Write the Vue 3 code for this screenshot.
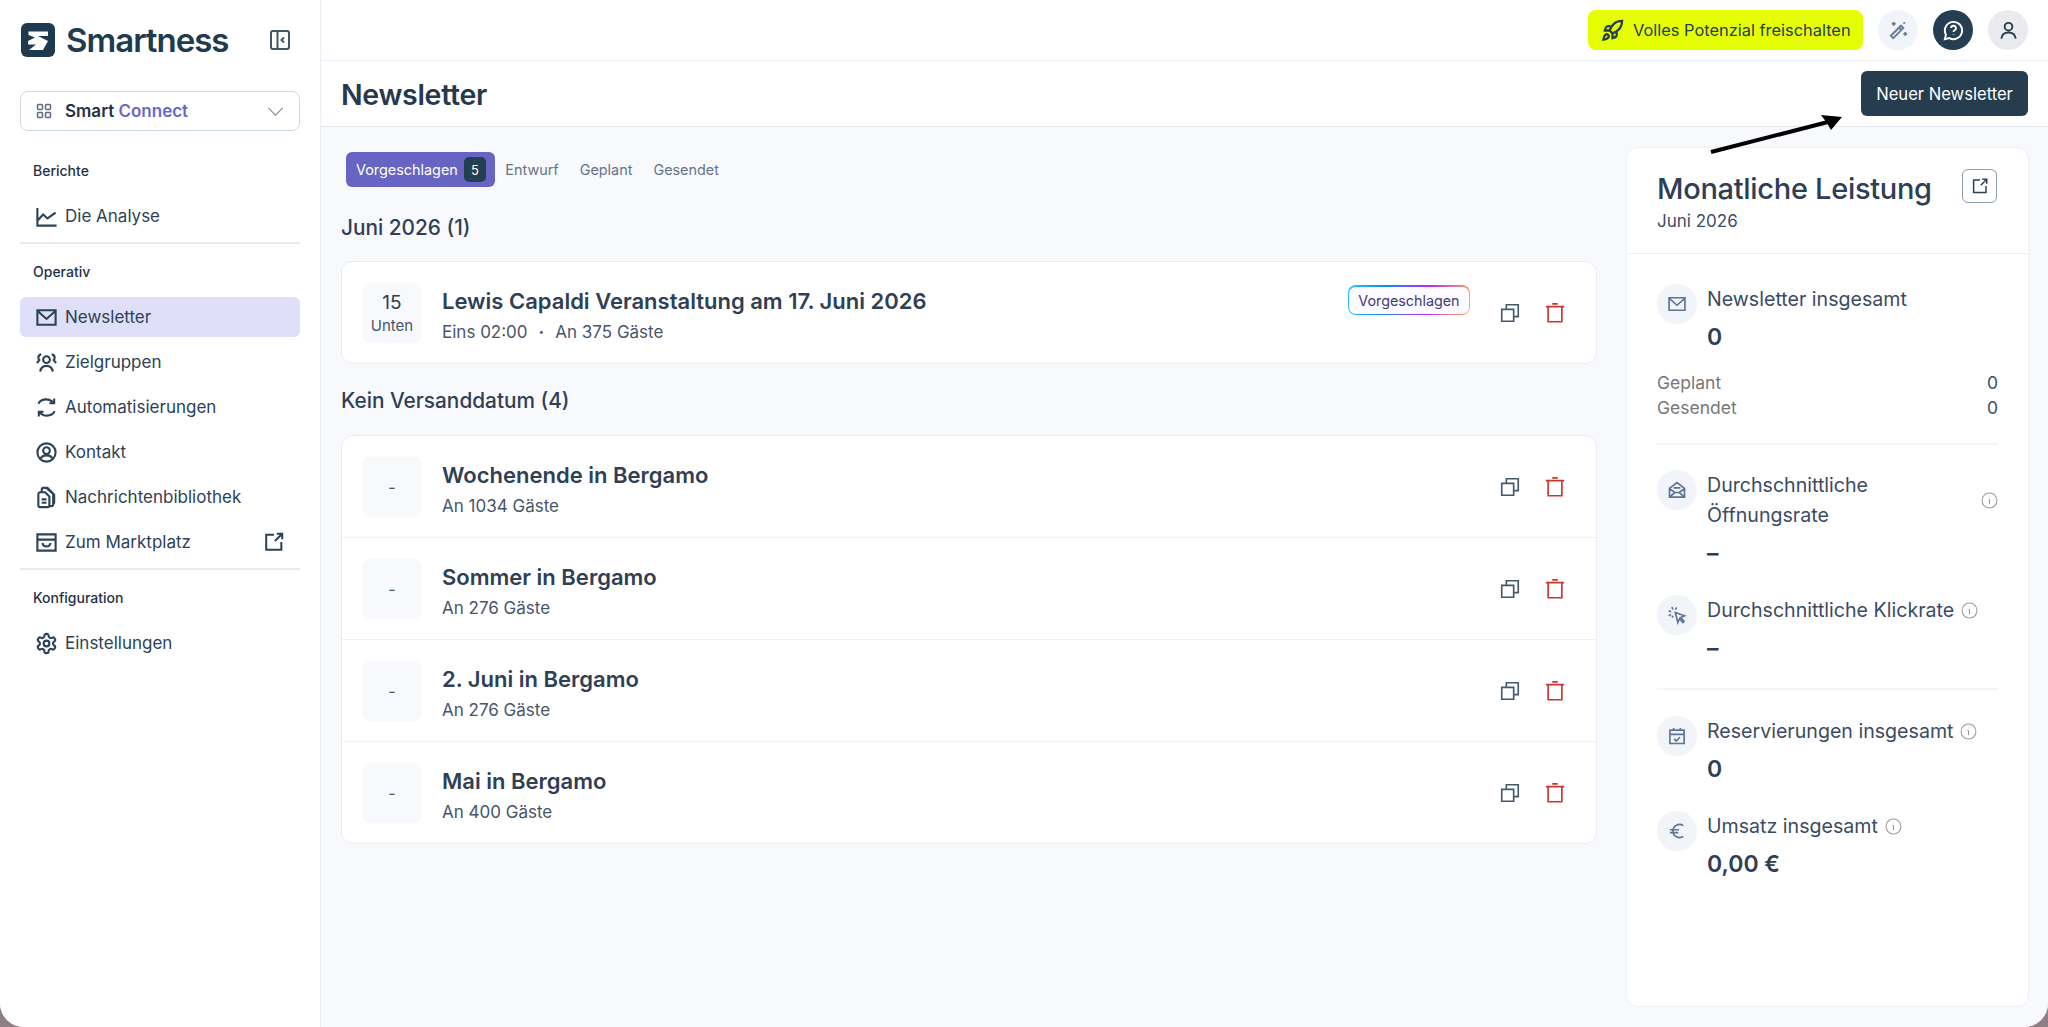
<template>
  <div class="app">
    <aside class="sidebar">
      <div class="brand">
        <svg class="logo" viewBox="0 0 34 34">
          <rect width="34" height="34" rx="6" fill="#1f3a4f" />
          <path d="M7.5 8.5H27V13H17l10 5-5 9H8l7-5.5H7v-3.5l7-3.5-6.5-2.5z" fill="#fff" />
        </svg>
        <span class="brand-name">Smartness</span>
        <svg class="collapse" viewBox="0 0 20 20">
          <rect x="1" y="1" width="18" height="18" rx="2" />
          <path d="M7.5 1v18M14 7.5 11.5 10l2.5 2.5" />
        </svg>
      </div>
      <div class="product">
        <svg class="ic-16" viewBox="0 0 16 16">
          <rect x="1.5" y="1.5" width="5" height="5" rx="1" />
          <rect x="9.5" y="1.5" width="5" height="5" rx="1" />
          <rect x="1.5" y="9.5" width="5" height="5" rx="1" />
          <rect x="9.5" y="9.5" width="5" height="5" rx="1" />
        </svg>
        <span class="product-name">Smart <em>Connect</em></span>
        <svg class="chev" viewBox="0 0 18 10"><path d="M1 1l8 8 8-8" /></svg>
      </div>

      <template v-for="(group, g) in nav" :key="group.title">
        <div v-if="g > 0" class="nav-sep"></div>
        <div class="nav-title">{{ group.title }}</div>
        <a v-for="item in group.items" :key="item.label" class="nav-item" :class="{ active: item.active }">
          <svg class="nav-icon" viewBox="0 0 24 24"><path :d="icons[item.icon]" /></svg>
          <span>{{ item.label }}</span>
          <svg v-if="item.external" class="nav-ext" viewBox="0 0 24 24"><path :d="icons.external" /></svg>
        </a>
      </template>
    </aside>

    <div class="main">
      <header class="topbar">
        <button class="upgrade">
          <svg viewBox="0 0 24 24"><path :d="icons.rocket" /></svg>
          Volles Potenzial freischalten
        </button>
        <span class="round light"><svg viewBox="0 0 24 24"><path :d="icons.wand" /></svg></span>
        <span class="round dark"><svg viewBox="0 0 24 24"><path :d="icons.help" /></svg></span>
        <span class="round grey"><svg viewBox="0 0 24 24"><path :d="icons.user" /></svg></span>
      </header>

      <div class="titlebar">
        <h1>Newsletter</h1>
        <button class="primary">Neuer Newsletter</button>
      </div>

      <div class="content">
        <section class="lists">
          <div class="tabs">
            <span class="tab on">Vorgeschlagen <b>5</b></span>
            <span class="tab">Entwurf</span>
            <span class="tab">Geplant</span>
            <span class="tab">Gesendet</span>
          </div>

          <template v-for="block in blocks" :key="block.title">
            <h2>{{ block.title }}</h2>
            <div class="card">
              <div v-for="row in block.rows" :key="row.title" class="row">
                <div class="date" :class="{ big: !row.day }">
                  <template v-if="row.day">
                    <strong>{{ row.day }}</strong>
                    <small>{{ row.month }}</small>
                  </template>
                  <template v-else>-</template>
                </div>
                <div class="row-text">
                  <h3>{{ row.title }}</h3>
                  <p>
                    <template v-if="row.time">{{ row.time }}<i class="dot">·</i></template>{{ row.guests }}
                  </p>
                </div>
                <span v-if="row.badge" class="badge"><span>{{ row.badge }}</span></span>
                <svg class="act copy" viewBox="0 0 24 24"><path :d="icons.copy" /></svg>
                <svg class="act trash" viewBox="0 0 24 24"><path :d="icons.trash" /></svg>
              </div>
            </div>
          </template>
        </section>

        <aside class="panel">
          <div class="panel-head">
            <div>
              <h2>Monatliche Leistung</h2>
              <p>Juni 2026</p>
            </div>
            <span class="open"><svg viewBox="0 0 24 24"><path :d="icons.external" /></svg></span>
          </div>
          <div class="panel-body">
            <div class="stat">
              <span class="stat-ic"><svg viewBox="0 0 24 24"><path :d="icons.mail" /></svg></span>
              <div>
                <div class="stat-label">Newsletter insgesamt</div>
                <div class="stat-value">0</div>
              </div>
            </div>
            <dl class="split">
              <div><dt>Geplant</dt><dd>0</dd></div>
              <div><dt>Gesendet</dt><dd>0</dd></div>
            </dl>
            <div class="panel-sep"></div>
            <div class="stat wide">
              <span class="stat-ic"><svg viewBox="0 0 24 24"><path :d="icons.mailOpen" /></svg></span>
              <div class="grow">
                <div class="stat-label wrap">
                  <span>Durchschnittliche<br />Öffnungsrate</span>
                  <svg class="info" viewBox="0 0 16 16"><path :d="icons.info" /></svg>
                </div>
                <div class="stat-value dash">–</div>
              </div>
            </div>
            <div class="stat next">
              <span class="stat-ic"><svg viewBox="0 0 24 24"><path :d="icons.click" /></svg></span>
              <div>
                <div class="stat-label">
                  Durchschnittliche Klickrate
                  <svg class="info" viewBox="0 0 16 16"><path :d="icons.info" /></svg>
                </div>
                <div class="stat-value dash">–</div>
              </div>
            </div>
            <div class="panel-sep second"></div>
            <div class="stat">
              <span class="stat-ic"><svg viewBox="0 0 24 24"><path :d="icons.calendar" /></svg></span>
              <div>
                <div class="stat-label">
                  Reservierungen insgesamt
                  <svg class="info" viewBox="0 0 16 16"><path :d="icons.info" /></svg>
                </div>
                <div class="stat-value">0</div>
              </div>
            </div>
            <div class="stat next">
              <span class="stat-ic"><svg viewBox="0 0 24 24"><path :d="icons.euro" /></svg></span>
              <div>
                <div class="stat-label">
                  Umsatz insgesamt
                  <svg class="info" viewBox="0 0 16 16"><path :d="icons.info" /></svg>
                </div>
                <div class="stat-value">0,00 €</div>
              </div>
            </div>
          </div>
        </aside>
      </div>
    </div>

    <!-- annotation drawn on top of the screenshot -->
    <svg class="arrow" viewBox="0 0 140 45">
      <path d="M3 38 120 8" />
      <path class="head" d="M134 3 113 1l6 8 4 7z" />
    </svg>
  </div>
</template>

<script setup>
const icons = {
  chart: 'M2.5 3v18.5h20M3 16l5.5-6 4.5 4 8.5-6',
  mail: 'M2.5 4.5h19v15h-19zM3 5.5l9 8 9-8',
  users: 'M8.5 9a3.5 3.5 0 1 0 7 0a3.5 3.5 0 1 0-7 0M5.5 21.5c.5-4 3-6 6.5-6s6 2 6.5 6M6.5 3.5a3.5 3.5 0 0 0-3 3.5c0 1 .5 2 1 2.5L2 12.5M17.5 3.5a3.5 3.5 0 0 1 3 3.5c0 1-.5 2-1 2.5l2.5 3',
  sync: 'M3.5 8c1.5-2.8 4.5-4.5 8-4.5 3 0 5.5 1 7.5 3.5M20 2.5V7.5h-5M20.5 16c-1.5 2.8-4.5 4.5-8 4.5-3 0-5.5-1-7.5-3.5M4 21.5v-5h5',
  contact: 'M2.5 12a9.5 9.5 0 1 0 19 0a9.5 9.5 0 1 0-19 0M8.5 10a3.5 3.5 0 1 0 7 0a3.5 3.5 0 1 0-7 0M5.5 19c1-2.5 3.5-4 6.5-4s5.5 1.5 6.5 4',
  library: 'M3.5 8.5a2 2 0 0 1 2-2h5l4.5 4.5v9a2 2 0 0 1-2 2h-7.5a2 2 0 0 1-2-2zM7 6V4a2 2 0 0 1 2-2h4l6 6v11a2 2 0 0 1-2 2h-2M12 2.5l1 .5 7 6v8c0 1-1 2-2 2M7 14h5M7 17.5h5',
  store: 'M2.5 3.5h19v17h-19zM2.5 9h19M8 12.5c0 2 1.5 3.5 4 3.5s4-1.5 4-3.5',
  external: 'M12 4H3.5v16.5H20V12M13 11l8-8M15 3h6v6',
  gear: 'M12.22 2h-.44a2 2 0 0 0-2 2v.18a2 2 0 0 1-1 1.73l-.43.25a2 2 0 0 1-2 0l-.15-.08a2 2 0 0 0-2.73.73l-.22.38a2 2 0 0 0 .73 2.73l.15.1a2 2 0 0 1 1 1.72v.51a2 2 0 0 1-1 1.74l-.15.09a2 2 0 0 0-.73 2.73l.22.38a2 2 0 0 0 2.73.73l.15-.08a2 2 0 0 1 2 0l.43.25a2 2 0 0 1 1 1.73V20a2 2 0 0 0 2 2h.44a2 2 0 0 0 2-2v-.18a2 2 0 0 1 1-1.73l.43-.25a2 2 0 0 1 2 0l.15.08a2 2 0 0 0 2.73-.73l.22-.39a2 2 0 0 0-.73-2.73l-.15-.08a2 2 0 0 1-1-1.74v-.5a2 2 0 0 1 1-1.74l.15-.09a2 2 0 0 0 .73-2.73l-.22-.38a2 2 0 0 0-2.73-.73l-.15.08a2 2 0 0 1-2 0l-.43-.25a2 2 0 0 1-1-1.73V4a2 2 0 0 0-2-2zM9 12a3 3 0 1 0 6 0a3 3 0 1 0-6 0',
  rocket: 'M4.5 16.5c-1.5 1.26-2 5-2 5s3.74-.5 5-2c.71-.84.7-2.13-.09-2.91a2.18 2.18 0 0 0-2.91-.09zM12 15l-3-3a22 22 0 0 1 2-3.95A12.88 12.88 0 0 1 22 2c0 2.72-.78 7.5-6 11a22.35 22.35 0 0 1-4 2zM9 12H4s.55-3.03 2-4c1.62-1.08 5 0 5 0M12 15v5s3.03-.55 4-2c1.08-1.62 0-5 0-5',
  wand: 'M4 17.5 14.5 7l2.5 2.5L6.5 20zM12.5 9l2.5 2.5M7 3v4M5 5h4M19 13.5v4M17 15.5h4M18 3v2M17 4h2',
  help: 'M12 3a9 9 0 1 1-4.3 16.9L3 21l1.1-4.7A9 9 0 0 1 12 3zM9.5 9.5a2.5 2.5 0 1 1 3.6 2.25c-.8.4-1.1.9-1.1 1.75M12 16.3v.4',
  user: 'M8 8a4 4 0 1 0 8 0a4 4 0 1 0-8 0M4.5 20.5c.5-4 3.5-6.5 7.5-6.5s7 2.5 7.5 6.5',
  copy: 'M3 8h13v13H3zM8 8V3h13v13h-5',
  trash: 'M2 5h20M9 2h6M4.5 5v16.5h15V5',
  mailOpen: 'M3 10v10.5h18V10L12 3zM3 10.5l6.5 4.5h5L21 10.5M3.5 20l6-5M20.5 20l-6-5M8 9.5h8',
  click: 'M10 9l11 4-4.5 2 4 4.5-1.5 1.5-4-4.5-2 4.5zM6 2.5l1 3M2 7l3 1M2 13l3-1.5M11.5 3 10 5.5M6 15l1.5-2',
  calendar: 'M3.5 5h17v16h-17zM3.5 10h17M8 2.5V6M16 2.5V6M8.5 15.5l2.5 2.5 4.5-4.5',
  euro: 'M19.5 5.5A8 8 0 0 0 7 12a8 8 0 0 0 12.5 6.5M3.5 10.5h11M3.5 14h10',
  info: 'M1 8a7 7 0 1 0 14 0a7 7 0 1 0-14 0M8 7v4.5M7 7h1M8 4.5v.5'
}

const nav = [
  { title: 'Berichte', items: [{ label: 'Die Analyse', icon: 'chart' }] },
  {
    title: 'Operativ',
    items: [
      { label: 'Newsletter', icon: 'mail', active: true },
      { label: 'Zielgruppen', icon: 'users' },
      { label: 'Automatisierungen', icon: 'sync' },
      { label: 'Kontakt', icon: 'contact' },
      { label: 'Nachrichtenbibliothek', icon: 'library' },
      { label: 'Zum Marktplatz', icon: 'store', external: true }
    ]
  },
  { title: 'Konfiguration', items: [{ label: 'Einstellungen', icon: 'gear' }] }
]

const blocks = [
  {
    title: 'Juni 2026 (1)',
    rows: [
      {
        day: '15',
        month: 'Unten',
        title: 'Lewis Capaldi Veranstaltung am 17. Juni 2026',
        time: 'Eins 02:00',
        guests: 'An 375 Gäste',
        badge: 'Vorgeschlagen'
      }
    ]
  },
  {
    title: 'Kein Versanddatum (4)',
    rows: [
      { title: 'Wochenende in Bergamo', guests: 'An 1034 Gäste' },
      { title: 'Sommer in Bergamo', guests: 'An 276 Gäste' },
      { title: '2. Juni in Bergamo', guests: 'An 276 Gäste' },
      { title: 'Mai in Bergamo', guests: 'An 400 Gäste' }
    ]
  }
]
</script>

<style>
body { background: #8d7f84; }
</style>

<style scoped>
* { box-sizing: border-box; }
.app {
  position: relative;
  display: flex;
  width: 2048px;
  height: 1027px;
  overflow: hidden;
  border-radius: 0 0 24px 24px;
  background: #fff;
  color: #2f3e55;
  font-family: Inter, "Liberation Sans", sans-serif;
}
svg { fill: none; stroke: currentColor; stroke-width: 2; flex: none; }

/* sidebar */
.sidebar { width: 321px; flex: none; padding: 0 20px; border-right: 1px solid #e9edf4; background: #fff; }
.brand { display: flex; align-items: center; height: 80px; }
.logo { width: 34px; height: 34px; margin-left: 1px; stroke: none; }
.brand-name { margin-left: 11px; font-size: 33px; font-weight: 600; letter-spacing: -1px; color: #203a4e; }
.collapse { width: 20px; height: 20px; margin-left: auto; margin-right: 10px; color: #3f566b; }
.product {
  display: flex;
  align-items: center;
  height: 40px;
  margin-top: 11px;
  padding: 0 15px;
  border: 1px solid #cfd9e6;
  border-radius: 8px;
}
.ic-16 { width: 16px; height: 16px; stroke-width: 1.5; color: #5c6b80; }
.product-name { margin-left: 13px; font-size: 17px; font-weight: 600; color: #1f3345; }
.product-name em { font-style: normal; color: #6a67c8; }
.chev { width: 17px; height: 9px; margin-left: auto; stroke-width: 1.3; color: #7d8fa5; }
.nav-title { margin: 0 13px; height: 20px; line-height: 20px; font-size: 14px; font-weight: 500; color: #1f3345; }
.product + .nav-title { margin-top: 30px; }
.nav-title + .nav-item { margin-top: 15px; }
.nav-sep { height: 2px; margin: 6px 0 18px; background: #e7ebf2; }
.nav-item {
  display: flex;
  align-items: center;
  height: 40px;
  padding: 0 15px;
  margin-bottom: 5px;
  border-radius: 6px;
  font-size: 17px;
  color: #2c4257;
}
.nav-item:last-child { margin-bottom: 0; }
.nav-item.active { background: #dfdffa; }
.nav-icon { width: 23px; height: 23px; margin-right: 7px; stroke-width: 2.2; color: #2c4257; }
.nav-ext { width: 22px; height: 22px; margin-left: auto; stroke-width: 2.2; color: #2c4257; }

/* top */
.main { flex: 1; display: flex; flex-direction: column; min-width: 0; background: #f8f9fc; }
.topbar {
  display: flex;
  align-items: center;
  justify-content: flex-end;
  height: 61px;
  padding-right: 20px;
  gap: 15px;
  background: #fff;
  border-bottom: 1px solid #e9edf4;
}
.upgrade {
  display: flex;
  align-items: center;
  gap: 9px;
  width: 275px;
  height: 40px;
  padding: 0 13px;
  border: 0;
  border-radius: 8px;
  background: #e6ff00;
  font: 400 16.4px Inter, "Liberation Sans", sans-serif;
  color: #263d50;
  white-space: nowrap;
}
.upgrade svg { width: 23px; height: 23px; stroke-width: 2.4; }
.round { display: flex; align-items: center; justify-content: center; width: 40px; height: 40px; border-radius: 50%; }
.round svg { width: 23px; height: 23px; stroke-width: 2; }
.round.light { background: #f1f4f9; color: #6b7c99; }
.round.dark { background: #243e52; color: #fff; }
.round.grey { background: #e9ebee; color: #263d50; }
.titlebar {
  display: flex;
  align-items: center;
  justify-content: space-between;
  height: 66px;
  padding: 0 20px;
  background: #fff;
  border-bottom: 1px solid #e2e7ef;
}
h1 { margin: 1px 0 0; font-size: 28.5px; font-weight: 600; color: #26384d; letter-spacing: -0.3px; }
.primary {
  height: 45px;
  width: 167px;
  border: 0;
  border-radius: 6px;
  background: #263d50;
  color: #fff;
  font: 400 16.6px Inter, "Liberation Sans", sans-serif;
}

/* list */
.content { flex: 1; display: flex; gap: 29px; padding: 20px 19px 20px 20px; min-height: 0; }
.lists { flex: 1; min-width: 0; }
.tabs { display: flex; align-items: center; height: 35px; margin: 5px 0 0 5px; }
.tab { display: flex; align-items: center; padding: 0 10.5px; height: 35px; font-size: 14.4px; color: #64748b; border-radius: 6px; }
.tab.on { gap: 6px; padding: 0 9px 0 10px; background: #6764c4; color: #fff; }
.tab b { display: flex; align-items: center; justify-content: center; width: 22px; height: 25px; border-radius: 5px; background: #243e52; font-weight: 400; font-size: 13px; }
.lists h2 { margin: 28px 0 20px; font-size: 20.8px; line-height: 26px; font-weight: 500; color: #303f55; }
.lists .card + h2 { margin: 24px 0 21px; }
.card { background: #fff; border: 1px solid #e8ecf3; border-radius: 12px; }
.row { display: flex; align-items: center; height: 101px; padding: 0 30px 0 20px; }
.row + .row { height: 102px; border-top: 1px solid #eef1f6; }
.date {
  display: flex;
  flex-direction: column;
  align-items: center;
  justify-content: center;
  width: 60px;
  height: 60px;
  margin-right: 20px;
  border-radius: 8px;
  background: #f8f9fc;
  font-size: 16px;
  color: #475569;
}
.date strong { font-size: 19px; font-weight: 400; line-height: 26px; color: #2f3e55; }
.date small { font-size: 15px; line-height: 20px; color: #475569; }
.row-text { flex: 1; min-width: 0; padding-top: 3px; }
.row-text h3 { margin: 0 0 5px; font-size: 22px; line-height: 30px; font-weight: 600; color: #303f55; }
.row-text p { margin: 0; font-size: 17px; line-height: 22px; color: #475569; }
.dot { font-style: normal; margin: 0 11px; font-weight: 700; }
.badge {
  display: inline-flex;
  align-self: flex-start;
  margin-top: 23px;
  margin-right: 29px;
  padding: 1.5px;
  border-radius: 8px;
  background: linear-gradient(100deg, #27c8f5 0%, #0c8cff 30%, #b52bff 65%, #ffb347 100%);
}
.badge span { display: block; padding: 0 9px; height: 27px; line-height: 27px; border-radius: 6.5px; background: #fdfbff; font-size: 14.3px; color: #3f3d75; }
.act { width: 22px; height: 22px; stroke-width: 1.8; }
.copy { color: #44596c; margin-right: 23px; }
.trash { color: #c9362f; }

/* panel */
.panel { width: 403px; flex: none; background: #fff; border: 1px solid #edf0f5; border-radius: 12px; }
.panel-head { display: flex; justify-content: space-between; height: 106px; padding: 21px 31px 0 30px; border-bottom: 1px solid #edf0f5; }
.panel-head h2 { margin: 0; font-size: 29px; line-height: 40px; font-weight: 500; color: #2f3e55; letter-spacing: -0.3px; }
.panel-head p { margin: 1px 0 0; font-size: 17px; line-height: 22px; color: #3d4d63; }
.open { display: flex; align-items: center; justify-content: center; width: 35px; height: 34px; border: 1px solid #8c9bae; border-radius: 6px; color: #2f3e55; }
.open svg { width: 18px; height: 18px; }
.panel-body { padding: 30px 30px 0; }
.stat { display: flex; gap: 10px; }
.stat.next { margin-top: 27px; }
.grow { flex: 1; }
.stat-ic { display: flex; align-items: center; justify-content: center; flex: none; width: 40px; height: 40px; border-radius: 50%; background: #f1f4f9; color: #5f7396; }
.stat-ic svg { width: 20px; height: 20px; }
.stat-label { display: flex; align-items: center; gap: 7px; font-size: 19.6px; line-height: 30px; color: #3a4b63; white-space: nowrap; }
.stat-label.wrap { justify-content: space-between; }
.stat-value { margin-top: 8px; font-size: 23px; line-height: 30px; font-weight: 600; color: #2f3e55; }
.info { width: 17px; height: 17px; stroke-width: 1; color: #999; }
.split { margin: 18px 0 0; font-size: 17.5px; line-height: 25px; }
.split div { display: flex; justify-content: space-between; }
.split dt { color: #777; }
.split dd { margin: 0; color: #3a4b63; }
.panel-sep { height: 2px; margin: 23px 0 25px; background: #f3f5f9; }
.panel-sep.second { margin: 25px 0 26px; }

.arrow { position: absolute; left: 1708px; top: 114px; width: 140px; height: 45px; color: #000; stroke-width: 4; }
.arrow .head { fill: #000; stroke: none; }
</style>
